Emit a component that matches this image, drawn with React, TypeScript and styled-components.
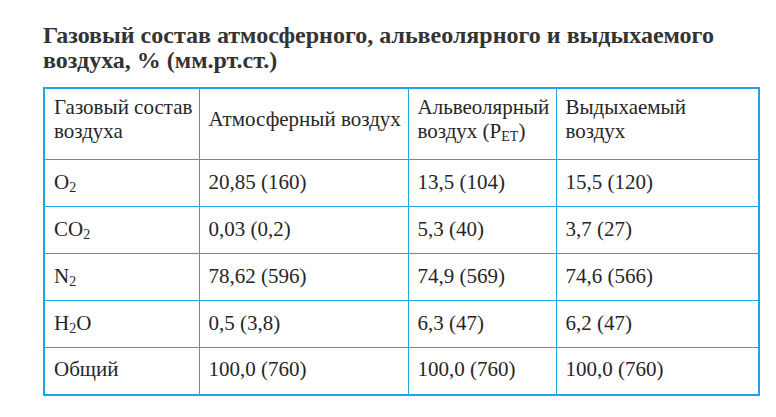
import styled, { createGlobalStyle } from "styled-components";

const GlobalStyle = createGlobalStyle`
  body {
    margin: 0;
    background: #ffffff;
    color: #2b2b2b;
    font-family: "Liberation Serif", "Times New Roman", serif;
  }
`;

const Page = styled.div`
  padding: 23px 18px 0 43px;
`;

const Title = styled.h2`
  margin: 0 0 14px;
  font-size: 24px;
  line-height: 25px;
  font-weight: 700;
  color: #333333;
  white-space: nowrap;
`;

const Table = styled.table`
  width: 715px;
  table-layout: fixed;
  border-collapse: collapse;
  border: 2px solid #1ba6e0;
  font-family: "Liberation Serif", "Times New Roman", serif;
  font-size: 21px;
  color: #262626;
`;

const Row = styled.tr<{ $head?: boolean }>`
  height: ${({ $head }) => ($head ? "71px" : "47px")};
`;

const Cell = styled.td<{ $head?: boolean }>`
  border: 1.5px solid #1ba6e0;
  padding: ${({ $head }) => ($head ? "6px 6px 16px 9px" : "7px 6px 10px 9px")};
  vertical-align: middle;
  line-height: 24px;
  text-align: left;
  font-weight: 400;
  white-space: nowrap;
`;

const Sub = styled.sub`
  font-size: 14px;
  vertical-align: -3px;
  line-height: 0;
`;

const widths = [155, 209, 148, 203];

const rows: [React.ReactNode, string, string, string][] = [
  [<>O<Sub>2</Sub></>, "20,85 (160)", "13,5 (104)", "15,5 (120)"],
  [<>CO<Sub>2</Sub></>, "0,03 (0,2)", "5,3 (40)", "3,7 (27)"],
  [<>N<Sub>2</Sub></>, "78,62 (596)", "74,9 (569)", "74,6 (566)"],
  [<>H<Sub>2</Sub>O</>, "0,5 (3,8)", "6,3 (47)", "6,2 (47)"],
  ["Общий", "100,0 (760)", "100,0 (760)", "100,0 (760)"],
];

export default function App() {
  return (
    <Page>
      <GlobalStyle />
      <Title>
        Газовый состав атмосферного, альвеолярного и выдыхаемого
        <br />
        воздуха, % (мм.рт.ст.)
      </Title>
      <Table>
        <colgroup>
          {widths.map((w, i) => (
            <col key={i} style={{ width: w }} />
          ))}
        </colgroup>
        <tbody>
          <Row $head>
            <Cell $head>Газовый состав<br />воздуха</Cell>
            <Cell $head>Атмосферный воздух</Cell>
            <Cell $head>Альвеолярный<br />воздух (P<Sub>ET</Sub>)</Cell>
            <Cell $head>Выдыхаемый<br />воздух</Cell>
          </Row>
          {rows.map((r, i) => (
            <Row key={i}>
              {r.map((c, j) => (
                <Cell key={j}>{c}</Cell>
              ))}
            </Row>
          ))}
        </tbody>
      </Table>
    </Page>
  );
}
